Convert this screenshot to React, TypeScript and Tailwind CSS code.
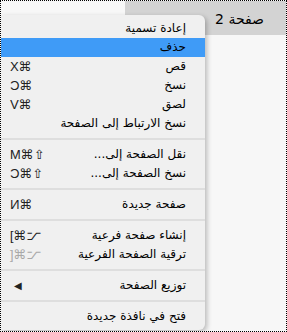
import React from "react";

type Item =
  | { type: "sep" }
  | { type: "item"; label: string; sc?: string; dim?: boolean; active?: boolean; arrow?: boolean };

const items: Item[] = [
  { type: "item", label: "إعادة تسمية" },
  { type: "item", label: "حذف", active: true },
  { type: "item", label: "قص", sc: "⌘X" },
  { type: "item", label: "نسخ", sc: "⌘C" },
  { type: "item", label: "لصق", sc: "⌘V" },
  { type: "item", label: "نسخ الارتباط إلى الصفحة" },
  { type: "sep" },
  { type: "item", label: "نقل الصفحة إلى...", sc: "⇧⌘M" },
  { type: "item", label: "نسخ الصفحة إلى...", sc: "⇧⌘C" },
  { type: "sep" },
  { type: "item", label: "صفحة جديدة", sc: "⌘N" },
  { type: "sep" },
  { type: "item", label: "إنشاء صفحة فرعية", sc: "⌥⌘]" },
  { type: "item", label: "ترقية الصفحة الفرعية", sc: "⌥⌘[", dim: true },
  { type: "sep" },
  { type: "item", label: "توزيع الصفحة", arrow: true },
  { type: "sep" },
  { type: "item", label: "فتح في نافذة جديدة" },
];

export default function App() {
  return (
    <div
      className="relative w-[287px] h-[332px] overflow-hidden border border-dotted border-black bg-[#f7f7f7]"
      style={{ fontFamily: '"DejaVu Sans", "Noto Sans", sans-serif' }}
    >
      <div className="flex h-[34px]">
        <div className="w-[124px] h-[13px] bg-[#f7f7f7]" />
        <div className="flex-1 bg-[#d3d3d3] flex items-start justify-end pr-[22px] pt-[9px]">
          <span dir="rtl" className="text-[14px] leading-[18px] text-black">صفحة 2</span>
        </div>
      </div>
      <div className="absolute left-0 top-[14px] w-[204px] bg-[#f0f0f0] rounded-r-[6px] shadow-[2px_2px_5px_rgba(0,0,0,0.25)] py-[4px]">
        {items.map((it, i) =>
          it.type === "sep" ? (
            <div key={i} className="py-[5px]">
              <div className="h-[2px] bg-[#dedede]" />
            </div>
          ) : (
            <div
              key={i}
              className={`relative flex items-center justify-between h-[19px] pl-[9px] pr-[19px] ${it.active ? "bg-[#3f9bf7]" : ""}`}
            >
              <span
                className={`-scale-x-100 text-[13px] leading-[19px] ${it.dim ? "text-[#a8a8a8]" : "text-[#222]"}`}
                style={{ fontFamily: '"Liberation Sans", "DejaVu Sans", sans-serif' }}
              >
                {it.sc ?? ""}
              </span>
              {it.arrow ? (
                <span className="absolute left-[13px] top-0 text-[10px] leading-[19px] text-[#222]">◀</span>
              ) : null}
              <span dir="rtl" className="text-[12px] leading-[19px] text-black">
                {it.label}
              </span>
            </div>
          )
        )}
      </div>
    </div>
  );
}
